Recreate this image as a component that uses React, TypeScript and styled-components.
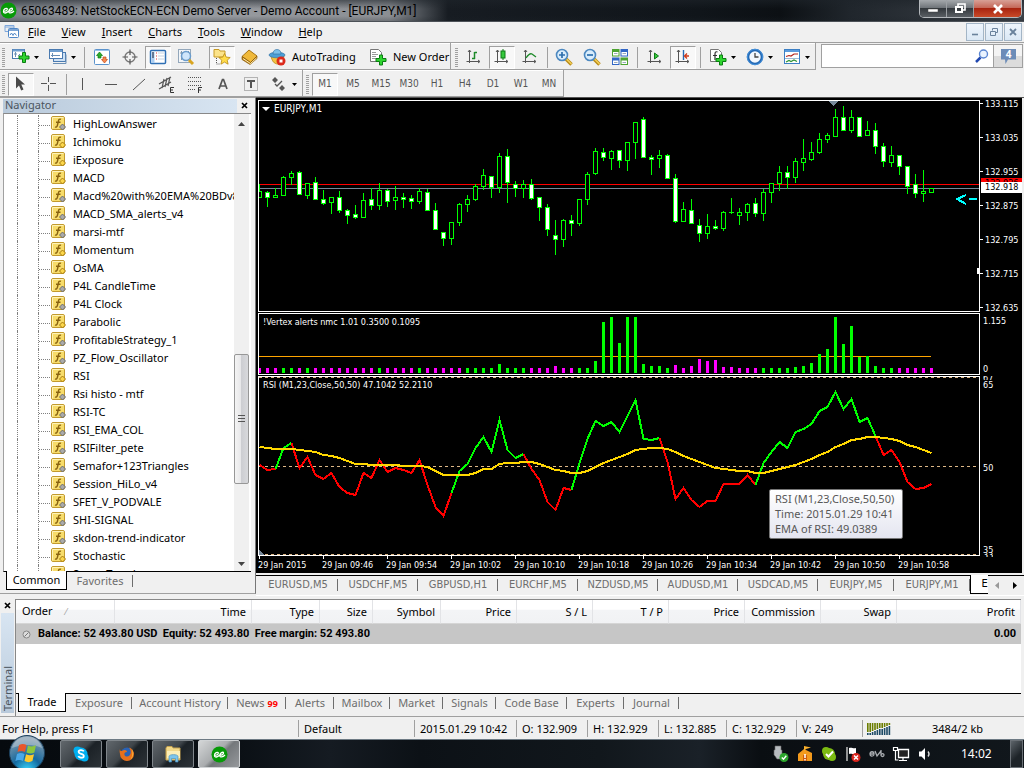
import React from "react";
import styled, { createGlobalStyle, css } from "styled-components";

const UI = `"Noto Sans", "Open Sans", sans-serif`;
const CHART = `"DejaVu Sans Condensed", "DejaVu Sans", sans-serif`;

const GlobalStyle = createGlobalStyle`
  * { box-sizing: border-box; }
  body { margin: 0; background: #f0f0f0; font: 11px/14px ${UI}; color: #000; }
  button { font: inherit; color: inherit; margin: 0; padding: 0; border: 0; background: none; }
  ul { margin: 0; padding: 0; list-style: none; }
  svg { display: block; flex: none; }
`;

/* ---------- data ---------- */

type Candle = [high: number, top: number, bottom: number, low: number, filled: number];

const CANDLES: Candle[] = [
  [89, 96, 103, 103, 0], [96, 97, 103, 112, 1], [93, 100, 103, 103, 0], [81, 82, 101, 101, 0], [76, 78, 83, 90, 0],
  [76, 77, 100, 100, 1], [88, 88, 101, 104, 0], [82, 87, 105, 105, 1], [95, 104, 109, 110, 1], [102, 102, 108, 119, 0],
  [96, 102, 116, 118, 1], [114, 115, 121, 129, 1], [110, 119, 123, 124, 1], [98, 105, 123, 123, 0], [93, 104, 111, 115, 1],
  [88, 95, 111, 115, 0], [94, 95, 107, 112, 1], [91, 102, 106, 115, 0], [98, 102, 105, 113, 1], [100, 103, 107, 114, 1],
  [93, 96, 107, 109, 0], [94, 97, 116, 116, 1], [108, 115, 135, 135, 1], [137, 137, 144, 151, 1], [127, 127, 144, 150, 0],
  [108, 109, 128, 131, 0], [100, 104, 110, 117, 0], [89, 91, 105, 106, 0], [74, 80, 92, 95, 0], [81, 81, 93, 103, 1],
  [58, 61, 93, 98, 0], [54, 61, 88, 108, 1], [86, 89, 94, 102, 1], [85, 89, 94, 103, 0], [84, 89, 104, 105, 1],
  [102, 102, 113, 126, 1], [109, 112, 135, 141, 1], [125, 140, 145, 160, 1], [124, 125, 145, 152, 0], [120, 125, 129, 141, 1],
  [104, 104, 129, 131, 0], [77, 79, 105, 110, 0], [53, 56, 79, 80, 0], [53, 57, 63, 66, 1], [55, 56, 64, 75, 0],
  [55, 55, 66, 73, 1], [47, 47, 66, 76, 0], [27, 27, 48, 64, 0], [22, 24, 63, 63, 1], [60, 62, 65, 80, 1],
  [55, 60, 64, 73, 0], [59, 60, 84, 84, 1], [79, 83, 127, 128, 1], [107, 114, 127, 127, 0], [104, 115, 129, 129, 1],
  [124, 130, 139, 147, 1], [119, 131, 139, 144, 0], [125, 131, 134, 135, 1], [116, 117, 134, 136, 0], [103, 117, 118, 119, 0],
  [113, 117, 121, 130, 0], [108, 109, 118, 126, 0], [103, 108, 119, 122, 1], [94, 97, 119, 126, 0], [88, 88, 98, 108, 0],
  [71, 77, 89, 96, 0], [71, 77, 83, 94, 1], [63, 66, 83, 88, 0], [44, 63, 68, 76, 0], [47, 57, 65, 66, 0],
  [38, 44, 58, 59, 0], [38, 40, 45, 48, 0], [14, 22, 42, 42, 0], [11, 22, 36, 36, 1], [15, 22, 36, 38, 0],
  [22, 22, 42, 42, 1], [26, 35, 41, 41, 0], [28, 35, 52, 59, 1], [48, 51, 67, 72, 1], [51, 60, 68, 72, 0],
  [60, 60, 72, 80, 1], [71, 71, 92, 99, 1], [79, 89, 99, 103, 1], [75, 96, 99, 107, 0], [93, 93, 98, 98, 0],
];

const BAR_COLOURS =
  "MMMGGMGMMMMMMMMGMMMMGMMMMMGGGGGGGGMMMMMMGGGGGGGGGGGGMMMMMMMMMMMGGGGGGGGGGGGGGGGGMMMMM";
const BAR_HEIGHTS: Record<number, number> = {
  30: 9, 37: 7, 42: 12, 43: 51, 44: 56, 45: 30, 46: 56, 47: 56, 48: 9, 49: 7, 50: 7, 52: 8, 54: 7, 55: 14, 56: 12,
  57: 13, 58: 6, 59: 6, 67: 6, 68: 7, 69: 10, 70: 19, 71: 24, 72: 56, 73: 29, 74: 47, 75: 16, 76: 17, 77: 7,
};

const RSI = [
  155, 160, 159, 138, 133, 158, 147, 165, 169, 163, 177, 183, 185, 163, 168, 150, 162, 158, 160, 163, 150, 175, 197, 206,
  183, 161, 154, 138, 127, 142, 110, 140, 148, 144, 159, 170, 192, 200, 178, 180, 153, 129, 111, 116, 112, 122, 106, 90,
  129, 130, 128, 152, 189, 178, 190, 197, 191, 191, 174, 174, 174, 165, 175, 153, 142, 132, 138, 122, 119, 114, 101, 97,
  82, 99, 89, 112, 108, 126, 145, 140, 152, 172, 179, 178, 174,
];
const EMA = [
  137, 138, 139, 139, 139, 140, 141, 142, 145, 146, 148, 151, 154, 154, 155, 155, 155, 155, 156, 156, 156, 157, 161, 165,
  165, 165, 165, 163, 159, 159, 154, 153, 153, 152, 152, 154, 157, 160, 161, 163, 163, 161, 157, 153, 150, 147, 144, 140,
  139, 138, 138, 139, 142, 146, 149, 152, 155, 158, 159, 160, 161, 161, 163, 163, 161, 159, 157, 155, 152, 149, 145, 142,
  137, 134, 130, 129, 127, 127, 128, 129, 131, 135, 137, 140, 143,
];
const RSI_RUNS: [number, number, string][] = [
  [0, 2, "#f00"], [2, 4, "#0f0"], [4, 24, "#f00"], [24, 33, "#0f0"], [33, 39, "#f00"],
  [39, 50, "#0f0"], [50, 62, "#f00"], [62, 77, "#0f0"], [77, 84, "#f00"],
];

/* name, true for a built-in indicator (gold diamond) */
const INDICATORS: [string, boolean][] = [
  ["HighLowAnswer", false], ["Ichimoku", true], ["iExposure", true], ["MACD", true], ["Macd%20with%20EMA%20BDv8", false],
  ["MACD_SMA_alerts_v4", false], ["marsi-mtf", false], ["Momentum", true], ["OsMA", true], ["P4L CandleTime", false],
  ["P4L Clock", false], ["Parabolic", true], ["ProfitableStrategy_1", false], ["PZ_Flow_Oscillator", false], ["RSI", true],
  ["Rsi histo - mtf", false], ["RSI-TC", false], ["RSI_EMA_COL", false], ["RSIFilter_pete", false],
  ["Semafor+123Triangles", false], ["Session_HiLo_v4", false], ["SFET_V_PODVALE", false], ["SHI-SIGNAL", false],
  ["skdon-trend-indicator", false], ["Stochastic", true], ["Super Trend", false],
];

const PRICES = ["133.115", "133.035", "132.955", "132.875", "132.795", "132.715", "132.635"];
const TIMES = ["29 Jan 2015", "29 Jan 09:46", "29 Jan 09:54", "29 Jan 10:02", "29 Jan 10:10", "29 Jan 10:18",
  "29 Jan 10:26", "29 Jan 10:34", "29 Jan 10:42", "29 Jan 10:50", "29 Jan 10:58"];
const CHART_TABS: [string, number][] = [["EURUSD,M5", 80], ["USDCHF,M5", 80], ["GBPUSD,H1", 80], ["EURCHF,M5", 80],
  ["NZDUSD,M5", 80], ["AUDUSD,M1", 80], ["USDCAD,M5", 80], ["EURJPY,M5", 76], ["EURJPY,M1", 76]];
const COLUMNS: [string, number | undefined][] = [["Order", 99], ["Time", 137], ["Type", 68], ["Size", 53], ["Symbol", 68],
  ["Price", 76], ["S / L", 76], ["T / P", 76], ["Price", 76], ["Commission", 76], ["Swap", 76], ["Profit", undefined]];
const TERMINAL_TABS: [string, number][] = [["Exposure", 66], ["Account History", 96], ["News", 58], ["Alerts", 48],
  ["Mailbox", 56], ["Market", 53], ["Signals", 53], ["Code Base", 71], ["Experts", 57], ["Journal", 55]];
const STATUS: [string, number][] = [["Default", 116], ["2015.01.29 10:42", 102], ["O: 132.909", 71], ["H: 132.929", 71],
  ["L: 132.885", 68], ["C: 132.929", 70], ["V: 249", 66]];

/* ---------- frame ---------- */

const Shell = styled.div`
  display: flex;
  flex-direction: column;
  min-height: 100vh;
  overflow: hidden;
`;

const TitleBar = styled.header`
  display: flex;
  height: 22px;
  border-bottom: 1px solid #4c5157;
  background:
    linear-gradient(180deg, rgba(30, 36, 42, 0.6) 0, rgba(30, 36, 42, 0) 9px, rgba(30, 36, 42, 0) 16px, rgba(30, 36, 42, 0.3) 22px),
    linear-gradient(90deg, #7a8087 0, #888c92 60px, #9a9da2 180px, #8b8e93 390px, #43484e 425px, #171c22 448px, #10151a 700px, #0c1014 780px, #20262c 850px, #3c4148 100%);
`;
const Title = styled.h1`
  margin: 0;
  display: flex;
  align-items: center;
  gap: 4px;
  font-family: Roboto, ${UI};
  font-size: 12px;
  font-weight: 400;
  line-height: 20px;
  white-space: nowrap;
  flex: 1;
`;
const WindowButtons = styled.div`
  display: flex;
  height: 18px;
  margin-right: 2px;
  border: 1px solid #b4b8bc;
  border-top: 0;
  border-radius: 0 0 5px 5px;
  overflow: hidden;
`;
const WindowButton = styled.button<{ $close?: boolean }>`
  width: ${(p) => (p.$close ? 47 : 27)}px;
  display: flex;
  align-items: center;
  justify-content: center;
  border-right: ${(p) => (p.$close ? 0 : 1)}px solid #9ca0a4;
  background: ${(p) =>
    p.$close
      ? "linear-gradient(#d8a096 0, #c5695a 45%, #a82410 50%, #c84a28 100%)"
      : "linear-gradient(#a4a8ac 0, #70757a 45%, #33383d 50%, #5a5f64 100%)"};
`;

const MenuBar = styled.nav`
  display: flex;
  align-items: center;
  height: 21px;
  padding: 0 2px 0 4px;
  border-bottom: 1px solid #a0a0a0;
  background: #f0f0f0;
`;
const MenuItems = styled.div`
  display: flex;
  gap: 16px;
  flex: 1;
  padding-left: 8px;
  line-height: 18px;
`;
const MdiButton = styled.button`
  width: 18px;
  height: 18px;
  margin-left: 1px;
  display: flex;
  align-items: center;
  justify-content: center;
  border: 1px solid #a3b5c6;
  background: linear-gradient(#eef5fc, #dbe8f5);
`;

const ToolRow = styled.div`
  display: flex;
  height: 27px;
`;
const ToolGroup = styled.div<{ $pad: number }>`
  display: flex;
  align-items: center;
  flex: none;
  padding: 2px 0 0 ${(p) => p.$pad}px;
  border-right: 1px solid #a0a0a0;
  border-bottom: 1px solid #a0a0a0;
  box-shadow: inset 0 1px #fff;
`;
const Grip = styled.i`
  width: 3px;
  height: 19px;
  margin-right: 2px;
  background: repeating-linear-gradient(#a0a0a0 0, #a0a0a0 1px, #f0f0f0 1px, #f0f0f0 2px);
`;
const Divider = styled.i<{ $after?: number }>`
  width: 1px;
  height: 21px;
  margin: 0 ${(p) => p.$after ?? 3}px 0 3px;
  background: #a0a0a0;
`;
const ToolButton = styled.button<{ $pressed?: boolean }>`
  width: 26px;
  height: 23px;
  margin: 0 1px;
  display: flex;
  align-items: center;
  justify-content: center;
  color: #555;
  ${(p) =>
    p.$pressed &&
    css`
      border: 1px solid #fff;
      border-top-color: #a0a0a0;
      border-left-color: #a0a0a0;
      background: #f8f8f8;
    `}
`;
const DropButton = styled.button`
  width: 37px;
  height: 23px;
  padding: 0 5px;
  display: flex;
  align-items: center;
  justify-content: space-between;
`;
const TextButton = styled.button<{ $width: number }>`
  width: ${(p) => p.$width}px;
  display: flex;
  align-items: center;
  gap: 6px;
  padding-left: 4px;
  white-space: nowrap;
`;
const Spacer = styled.i<{ $w: number }>`
  width: ${(p) => p.$w}px;
`;
const SearchBox = styled.div`
  flex: 1;
  min-width: 0;
  display: flex;
  height: 24px;
  margin: 1px 1px 0 5px;
  border: 1px solid #a0a0a0;
  background: #fff;
`;
const SearchInput = styled.input`
  flex: 1;
  min-width: 0;
  border: 0;
  padding: 0 4px;
  font: inherit;
  outline: 0;
`;
const SearchButton = styled.button`
  width: 22px;
  flex: none;
  display: flex;
  align-items: center;
  justify-content: center;
`;
const ChatButton = styled.button`
  width: 29px;
  flex: none;
  display: flex;
  align-items: center;
  justify-content: center;
  border-left: 1px solid #a0a0a0;
  background: linear-gradient(#f4f4f4 50%, #dcdcdc 50%);
`;

/* ---------- navigator ---------- */

const Main = styled.main`
  flex: 1;
  display: flex;
  min-height: 0;
`;
const Navigator = styled.aside`
  width: 256px;
  flex: none;
  display: flex;
  flex-direction: column;
  padding: 1px 3px 0 3px;
  margin-bottom: 4px;
  border-top: 1px solid #a0a0a0;
  border-right: 1px solid #777;
  border-bottom: 1px solid #a0a0a0;
`;
const PanelTitle = styled.div`
  display: flex;
  height: 14px;
  line-height: 13px;
`;
const PanelName = styled.h2`
  flex: 1;
  margin: 0;
  padding-left: 2px;
  font-size: 11px;
  font-weight: 400;
  line-height: 12px;
  color: #4b5560;
  background: linear-gradient(90deg, #b9cadb, #d8e5f2);
`;
const CloseButton = styled.button`
  width: 15px;
  height: 13px;
  display: flex;
  align-items: center;
  justify-content: center;
`;
const TreeFrame = styled.div`
  flex: 1 1 0;
  min-height: 0;
  display: flex;
  padding-right: 2px;
  background: #fff;
  border-top: 1px solid #888;
  border-left: 1px solid #a0a0a0;
  border-bottom: 1px solid #000;
  margin-right: 1px;
`;
const Tree = styled.ul`
  flex: 1;
  min-width: 0;
  overflow: hidden;
  padding: 1px 0 0 13px;
`;
const TreeRow = styled.li`
  display: flex;
  align-items: center;
  height: 18px;
  padding-left: 20px;
  border-left: 1px dotted #808080;
  white-space: nowrap;
`;
const Branch = styled.i`
  width: 13px;
  height: 18px;
  flex: none;
  border-left: 1px dotted #808080;
  background: repeating-linear-gradient(90deg, #808080 0, #808080 1px, #fff 1px, #fff 2px) 0 10px / 12px 1px no-repeat;
`;
const TreeLabel = styled.span`
  padding-left: 6px;
`;
const ScrollBar = styled.div`
  width: 15px;
  flex: none;
  display: flex;
  flex-direction: column;
  background: #f0f0f0;
`;
const ScrollButton = styled.button`
  height: 17px;
  padding-top: 2px;
  display: flex;
  align-items: center;
  justify-content: center;
`;
const ScrollTrack = styled.div`
  flex: 1;
  display: flex;
  flex-direction: column;
  justify-content: flex-end;
  padding-bottom: 70px;
`;
const ScrollThumb = styled.div`
  height: 130px;
  display: flex;
  align-items: center;
  justify-content: center;
  border: 1px solid #979797;
  border-radius: 2px;
  background: linear-gradient(90deg, #f4f4f4 0, #e6e6e8 50%, #cdced2 50%, #d8d9dc 100%);
`;
const NavTabs = styled.div`
  display: flex;
  height: 21px;
  padding-left: 3px;
  flex: none;
`;

/* ---------- tabs ---------- */

const ActiveTab = styled.button<{ $width: number }>`
  width: ${(p) => p.$width}px;
  height: 19px;
  margin-top: -1px;
  flex: none;
  overflow: hidden;
  white-space: nowrap;
  line-height: 16px;
  background: #fff;
  border: 1px solid #000;
  border-top: 0;
`;
const Tab = styled.button<{ $width: number }>`
  position: relative;
  width: ${(p) => p.$width}px;
  height: 18px;
  flex: none;
  white-space: nowrap;
  color: #6d6d6d;
  line-height: 16px;
  &::after {
    content: "";
    position: absolute;
    right: 0;
    top: 3px;
    width: 1px;
    height: 12px;
    background: #6d6d6d;
  }
`;
const NewsCount = styled.b`
  margin-left: 3px;
  font-size: 9px;
  line-height: 12px;
  color: #f00;
`;

/* ---------- chart ---------- */

const ChartColumn = styled.section`
  flex: 1;
  min-width: 0;
  display: flex;
  flex-direction: column;
  border-top: 1px solid #555;
`;
const ChartBox = styled.div`
  flex: 1;
  display: flex;
  flex-direction: column;
  gap: 1px;
  margin-right: 2px;
  padding: 2px 0 0 2px;
  background: #000;
  color: #fff;
  font: 9px/12px ${CHART};
`;
const Pane = styled.div`
  display: flex;
`;
const Plot = styled.div`
  position: relative;
  flex: 1;
  min-width: 0;
  border: 1px solid #fff;
`;
const PlotLabel = styled.div<{ $title?: boolean }>`
  position: absolute;
  left: ${(p) => (p.$title ? 3 : 4)}px;
  top: 2px;
  display: flex;
  align-items: center;
  gap: 4px;
  font-size: ${(p) => (p.$title ? 10 : 9)}px;
  white-space: nowrap;
`;
const Scale = styled.div<{ $indent: number; $top?: number }>`
  position: relative;
  width: 42px;
  flex: none;
  display: flex;
  flex-direction: column;
  justify-content: space-between;
  padding: ${(p) => p.$top ?? 0}px 0 0 ${(p) => p.$indent}px;
`;
const PriceScale = styled(Scale)`
  margin: -2px 0;
`;
const PriceLabel = styled.span`
  position: relative;
  &::before {
    content: "";
    position: absolute;
    left: -5px;
    top: 5px;
    width: 3px;
    height: 1px;
    background: #fff;
  }
`;
const PriceTag = styled.span<{ $top: number; $ask?: boolean }>`
  position: absolute;
  left: 1px;
  right: 0;
  top: ${(p) => p.$top}px;
  padding-left: 4px;
  height: ${(p) => (p.$ask ? 4 : 11)}px;
  line-height: 11px;
  overflow: hidden;
  color: #000;
  background: ${(p) => (p.$ask ? "#f00" : "#fff")};
`;
const HiddenLevel = styled.span<{ $top: number }>`
  position: absolute;
  left: 3px;
  top: ${(p) => p.$top}px;
  height: 4px;
  line-height: 4px;
  overflow: hidden;
`;
const TimeAxis = styled.div`
  display: flex;
  height: 17px;
  overflow: hidden;
  margin-top: -1px;
`;
const TimeLabel = styled.span`
  width: 64px;
  flex: none;
  white-space: nowrap;
  line-height: 12px;
  &::before {
    content: "";
    display: block;
    width: 1px;
    height: 3px;
    margin-left: 1px;
    background: #fff;
  }
`;
const Tooltip = styled.div`
  position: absolute;
  left: 510px;
  top: 112px;
  padding: 1px 8px 2px 5px;
  border: 1px solid #767676;
  border-radius: 2px;
  background: linear-gradient(#fff, #e4e5f0);
  color: #575757;
  font: 11px/15px ${UI};
  white-space: nowrap;
`;
const ChartTabs = styled.div`
  display: flex;
  height: 20px;
  margin: 2px 0 3px 0;
  padding-left: 2px;
  border-top: 1px solid #000;
  box-shadow: 0 1px #fff;
  font: 11px/16px ${CHART};
`;
const ChartTabList = styled.div`
  flex: 1;
  min-width: 0;
  display: flex;
  overflow: hidden;
  margin-top: -1px;
  padding-top: 1px;
`;
const TabArrows = styled.div`
  width: 36px;
  flex: none;
  display: flex;
  align-items: center;
  justify-content: space-around;
`;
const ArrowButton = styled.button`
  width: 12px;
  height: 14px;
  display: flex;
  align-items: center;
  justify-content: center;
`;

/* ---------- terminal ---------- */

const Terminal = styled.section`
  display: flex;
  height: 118px;
  padding-top: 1px;
`;
const TerminalSide = styled.div`
  width: 15px;
  flex: none;
  display: flex;
  flex-direction: column;
`;
const TerminalName = styled.h2`
  flex: 1;
  margin: 1px 1px 3px 1px;
  font-size: 11px;
  font-weight: 400;
  line-height: 13px;
  writing-mode: vertical-rl;
  rotate: 180deg;
  padding-top: 2px;
  color: #4b5560;
  background: linear-gradient(#b9cadb, #d8e5f2);
`;
const TerminalBody = styled.div`
  flex: 1;
  min-width: 0;
  display: flex;
  flex-direction: column;
  margin-right: 3px;
  border-top: 1px solid #888;
  border-left: 1px solid #888;
`;
const TableArea = styled.div`
  height: 94px;
  background: #fff;
  border-bottom: 1px solid #000;
`;
const Table = styled.table`
  width: 100%;
  table-layout: fixed;
  border-collapse: separate;
  border-spacing: 0;
`;
const HeadCell = styled.th<{ $first?: boolean }>`
  height: 24px;
  padding: 0 5px 0 6px;
  font-weight: 400;
  text-align: ${(p) => (p.$first ? "left" : "right")};
  white-space: nowrap;
  border-right: 1px solid #e2e3e6;
  border-bottom: 1px solid #d5d5d5;
  background: linear-gradient(#fff 40%, #f3f4f6 45%, #f1f2f4);
`;
const SortMark = styled.span`
  display: inline-block;
  margin-left: 13px;
  color: #999;
  font-size: 9px;
`;
const BalanceCell = styled.td<{ $right?: boolean }>`
  height: 20px;
  padding: 0 5px 0 6px;
  font-family: Roboto, ${UI};
  font-weight: 700;
  text-align: ${(p) => (p.$right ? "right" : "left")};
  white-space: nowrap;
  background: #c6c6c6;
`;
const BalanceLine = styled.div`
  display: flex;
  align-items: center;
  gap: 7px;
`;
const TerminalTabs = styled.div`
  display: flex;
  height: 19px;
  padding-left: 2px;
`;

/* ---------- status and task bars ---------- */

const StatusBar = styled.footer`
  display: flex;
  height: 23px;
  padding-top: 3px;
  border-top: 1px solid #a0a0a0;
  line-height: 18px;
  white-space: nowrap;
`;
const StatusHelp = styled.span`
  flex: 1 1 0;
  padding-left: 2px;
`;
const StatusCell = styled.span<{ $width: number }>`
  width: ${(p) => p.$width}px;
  height: 17px;
  padding-left: 5px;
  border-left: 1px solid #a0a0a0;
`;
const Traffic = styled.span`
  display: flex;
  align-items: center;
  width: 162px;
  height: 17px;
  padding-left: 4px;
  gap: 41px;
  border-left: 1px solid #a0a0a0;
`;
const TaskBar = styled.div`
  position: relative;
  display: flex;
  height: 29px;
  padding-left: 60px;
  gap: 4px;
  border-top: 1px solid #6d7a84;
  background: linear-gradient(90deg, #060a0e 0, #0b1015 240px, #151b22 330px, #0c1116 420px, #11171c 600px, #1a2128 700px, #0a0e12 760px, #11171c 100%);
`;
const StartButton = styled.button`
  position: absolute;
  left: 8px;
  top: -6px;
`;
const TaskButton = styled.button<{ $active?: boolean }>`
  width: 42px;
  height: 28px;
  display: flex;
  align-items: center;
  justify-content: center;
  border: 1px solid ${(p) => (p.$active ? "#d0d3d5" : "#80868b")};
  border-radius: 2px;
  background: ${(p) =>
    p.$active
      ? "linear-gradient(135deg, #d4d6d7 0, #a9acae 45%, #74787b 55%, #96999c 100%)"
      : "linear-gradient(135deg, #61676c 0, #3f454a 45%, #1c2227 55%, #2c3237 100%)"};
`;
const Tray = styled.div`
  flex: 1;
  display: flex;
  align-items: center;
  justify-content: flex-end;
  gap: 6px;
`;
const Clock = styled.time`
  width: 30px;
  margin: 0 13px 0 21px;
  font-size: 12px;
  color: #fff;
`;
const ShowDesktop = styled.button`
  width: 13px;
  height: 28px;
  margin-right: 1px;
  border: 1px solid #6a7076;
  background: linear-gradient(135deg, #5d646a, #1d2328 60%);
`;

/* ---------- icons ---------- */

const Svg = ({ w = 18, h = 18, children }: { w?: number; h?: number; children: React.ReactNode }) => (
  <svg width={w} height={h} viewBox={`0 0 ${w} ${h}`} fill="none" aria-hidden="true">
    {children}
  </svg>
);
const Caret = ({ c = "#000" }: { c?: string }) => (
  <Svg w={5} h={3}><path d="M0 0h5L2.5 3z" fill={c} /></Svg>
);
const Cross = () => (
  <Svg w={7} h={7}><path d="M1 1l5 5M6 1L1 6" stroke="#000" strokeWidth="1.7" /></Svg>
);
const Plus = ({ x, y }: { x: number; y: number }) => (
  <path transform={`translate(${x} ${y})`} d="M4 .5h3v3.500h3.500v3h-3.500v3.500H4V7H.5V4H4z" fill="#2fd52f" stroke="#0a7d12" />
);
const EeLogo = ({ s }: { s: number }) => (
  <svg width={s} height={s} viewBox="0 0 17 17" aria-hidden="true">
    <circle cx="8.500" cy="8.500" r="8" fill="#079a07" />
    <path d="M3 9.500c2.500 0 4.500-1 4.300-2.600C7 5.300 3.200 7 3.500 9.600c.3 2.300 3 1.500 5-.3 2.400-.1 4.200-1 4-2.500-.3-1.500-3.800.2-3.700 2.700.1 2.300 3 1.700 5.200-.5"
      fill="none" stroke="#fff" strokeWidth="1.300" />
  </svg>
);
const NewChartIcon = () => (
  <Svg>
    <rect x=".5" y="1.500" width="12" height="9" fill="#fff" stroke="#4a7ab0" />
    <path d="M.5 2.500h12" stroke="#6f9fd0" strokeWidth="2" />
    <path d="M3.500 4v5M2 6h3M6 8l2-2" stroke="#6a8fb5" />
    <Plus x={6.500} y={4} />
  </Svg>
);
const ProfilesIcon = () => (
  <Svg>
    <rect x="4.500" y="4.500" width="12" height="9" fill="#cfe2f5" stroke="#4a7ab0" />
    <path d="M4 15.500h13v-9" stroke="#6a8fb5" />
    <rect x=".5" y="1.500" width="13" height="9" fill="#fff" stroke="#4a7ab0" />
    <path d="M1 3h12" stroke="#6f9fd0" strokeWidth="2" />
    <path d="M3.500 5v4M2 7.500h9" stroke="#6a8fb5" />
  </Svg>
);
const MarketWatchIcon = () => (
  <Svg>
    <rect x="1.500" y="1.500" width="15" height="15" rx="1" fill="#fff" stroke="#5b93cc" />
    <path d="M2 2.500h14" stroke="#9cc3ea" />
    <path d="M3.500 7.500L6.500 4l3 3.500H8V10H5V7.500z" fill="#2cae2c" stroke="#0d7a14" strokeWidth=".7" />
    <path d="M8.500 11.500l3 3.500 3-3.500H13V9h-3v2.500z" fill="#f58a50" stroke="#c0481a" strokeWidth=".7" />
  </Svg>
);
const TargetIcon = () => (
  <Svg>
    <circle cx="9" cy="9" r="5" stroke="#777" strokeWidth="1.300" />
    <path d="M9 1.500v5.500M9 11v5.500M1.500 9H7M11 9h5.500" stroke="#555" strokeWidth="1.200" />
  </Svg>
);
const NavigatorIcon = () => (
  <Svg>
    <rect x="1.500" y="2.500" width="15" height="13" rx="1" fill="#fff" stroke="#2f6fb4" strokeWidth="1.500" />
    <rect x="2.500" y="4" width="3" height="11" fill="#a9cdf2" />
    <path d="M3 5h2M3 7h2M3 9h2" stroke="#223" />
    <path d="M7 5h1M7 8h1M7 11h1" stroke="#d33" />
    <path d="M9 5h6M9 8h6M9 11h6" stroke="#c4d2e2" />
  </Svg>
);
const TesterIcon = () => (
  <Svg>
    <rect x="1.500" y="1.500" width="12" height="13" fill="#f3f6f9" stroke="#93a7bb" />
    <path d="M4.500 3v9M11.500 3v6M3 5h3M10 6h3" stroke="#8499ad" />
    <circle cx="9" cy="8" r="4.500" fill="#cfe6fb" stroke="#6a9ccc" strokeWidth="1.500" />
    <path d="M12 12l4 4" stroke="#d9a520" strokeWidth="3" />
  </Svg>
);
const StarFolderIcon = () => (
  <Svg>
    <path d="M1 3V1.500h5L7 3h5v6H1z" fill="#fbe38a" stroke="#c79a24" />
    <path d="M3.500 10v6h3" stroke="#555" strokeDasharray="1 1" />
    <path d="M11.500 5.500l1.700 3.600 4 .4-3 2.700.9 4-3.600-2.100-3.600 2.100.9-4-3-2.700 4-.4z" fill="#ffdc4a" stroke="#b98914" strokeWidth=".8" />
  </Svg>
);
const GoldBookIcon = () => (
  <Svg>
    <path d="M1 8.500L8 2l8 6-6.500 6.500z" fill="#f0b93a" stroke="#a87410" />
    <path d="M1 8.500v3l8 5 7-6V8L9.500 14.500z" fill="#b87a12" stroke="#8a5c0c" strokeWidth=".7" />
    <path d="M2 10.500l7.500 5 6-5.500" stroke="#ffeeb0" />
  </Svg>
);
const ExpertIcon = () => (
  <Svg>
    <path d="M3 8c1 5 3 8 7 8s5-4 6-8z" fill="#f2c340" stroke="#b58412" strokeWidth=".8" />
    <ellipse cx="9" cy="7" rx="8" ry="2.800" fill="#4c9fd6" stroke="#2b6c9e" strokeWidth=".6" />
    <path d="M5 6c0-3 1.500-4.500 4-4.500S13 3 13 6z" fill="#7cc0ea" stroke="#2b6c9e" strokeWidth=".6" />
    <circle cx="13" cy="13" r="4.500" fill="#dc2a1c" />
    <rect x="11.500" y="11.500" width="3" height="3" fill="#fff" />
  </Svg>
);
const DocPlus = ({ fn }: { fn?: boolean }) => (
  <Svg>
    <path d="M1.500 1.500h8l3 3v9h-11z" fill="#fff" stroke="#777" />
    {fn ? (
      <path d="M8.500 4c-2-.8-2.500.5-2.500 2v6M4 7.500h4" stroke="#333" strokeWidth="1.200" />
    ) : (
      <path d="M3 4.500h4M3 6.500h6M3 8.500h4M3 10.500h4" stroke="#999" />
    )}
    <Plus x={6.500} y={6.500} />
  </Svg>
);
const Axes = ({ children }: { children: React.ReactNode }) => (
  <Svg>
    <path d="M4.500 2v13M1.500 13.500h13M3 4l1.500-2L6 4M13 12l2 1.500-2 1.500" stroke="#555" />
    {children}
  </Svg>
);
const ZoomIcon = ({ plus }: { plus?: boolean }) => (
  <Svg>
    <path d="M11 11l5.500 5.500" stroke="#b88a18" strokeWidth="3.500" />
    <path d="M11.500 11l5 5" stroke="#f3cf57" strokeWidth="1.500" />
    <circle cx="7" cy="7" r="5.500" fill="#d9edfc" stroke="#4c88c0" strokeWidth="1.600" />
    <path d={plus ? "M4 7h6M7 4v6" : "M4 7h6"} stroke="#2e6fae" strokeWidth="1.700" />
  </Svg>
);
const TilesIcon = () => (
  <Svg>
    <path d="M1 1h7.500v7.500H1zM9.500 9.500H17V17H9.500z" fill="#4da331" />
    <path d="M9.500 1H17v7.500H9.500zM1 9.500h7.500V17H1z" fill="#3166c6" />
    <path d="M2 4h5.500v3.500H2zM10.500 4H16v3.500h-5.500zM2 12.500h5.500V16H2zM10.500 12.500H16V16h-5.500z" fill="#fff" />
    <path d="M3 5.500h3.500M11.500 5.500H15M3 14.500h3.500M11.500 14.500H15" stroke="#9ab" />
  </Svg>
);
const PeriodIcon = () => (
  <Svg>
    <circle cx="9" cy="9" r="7" fill="#f2f8fe" stroke="#2469b4" strokeWidth="2.600" />
    <circle cx="9" cy="9" r="7.700" stroke="#4d9be4" strokeWidth=".8" />
    <path d="M9 5v4h3.500" stroke="#444" strokeWidth="1.300" />
  </Svg>
);
const TemplateIcon = () => (
  <Svg>
    <rect x="1.500" y="1.500" width="15" height="14" fill="#fff" stroke="#3c7fc4" />
    <path d="M2 3h14" stroke="#5a9add" strokeWidth="2" />
    <path d="M3 8.500l3-1 2 .5 3-2h4" stroke="#b3221a" strokeWidth="1.200" />
    <path d="M2 10.500h14" stroke="#9cb9d6" />
    <path d="M3 14l3-1.500 2 1 3-1.500 3 1.500" stroke="#2f9436" strokeWidth="1.200" />
  </Svg>
);
const CursorIcon = () => (
  <Svg><path d="M4 1.500v12l3-3 2.200 5 2.300-1-2.200-5H13z" fill="#4a4a4a" /></Svg>
);
const FnIcon = ({ gold }: { gold: boolean }) => (
  <Svg w={16} h={16}>
    <rect x=".5" y=".5" width="13" height="13" rx="1.500" fill="#f7dc6a" stroke="#c29a2e" />
    <path d="M1.500 12.500v-11h11" stroke="#fff3b8" />
    <path d="M10 3.300C8 2.600 7.600 4 7.300 5.500L6.500 9c-.4 1.700-1 2.500-2.500 2M5 6.200h4.500" stroke="#8a6410" strokeWidth="1.400" />
    <path d="M11.500 8l3 3-3 3-3-3z" fill={gold ? "#fbd64c" : "#aaa"} stroke={gold ? "#a77a10" : "#6c6c6c"} />
  </Svg>
);
const Globe = () => (
  <svg width="38" height="35" viewBox="0 0 38 35" aria-hidden="true">
    <defs>
      <radialGradient id="orb" cx=".5" cy="1" r=".9">
        <stop offset="0" stopColor="#39d8ff" />
        <stop offset=".45" stopColor="#14689e" />
        <stop offset="1" stopColor="#7e98ac" />
      </radialGradient>
    </defs>
    <circle cx="19" cy="19" r="17.500" fill="url(#orb)" stroke="#1b3f5c" />
    <path d="M4 14a15.500 15.500 0 0 1 30 0c-8-4-20-4-30 0z" fill="#fff" opacity=".3" />
    <path d="M11 11c3-1.500 5-1.300 7.500 0l-1.500 7c-3-1.400-5-1.300-7.500 0z" fill="#e8562a" />
    <path d="M20 11.500c2.800 1.300 5 1.300 8-.2l-1.600 7.200c-2.900 1.400-5 1.300-7.900 0z" fill="#8cc63e" />
    <path d="M9 20c2.700-1.400 4.800-1.300 7.600 0L15 27c-2.800-1.300-5-1.200-7.600 0z" fill="#4aa8e8" />
    <path d="M18 20.300c3 1.400 5 1.400 8-.1L24.400 27c-2.800 1.500-5 1.500-7.900.1z" fill="#fcc92e" />
  </svg>
);
const SkypeIcon = () => (
  <Svg w={18} h={18}>
    <circle cx="9" cy="9" r="6.500" fill="#00aff0" />
    <circle cx="5.500" cy="5.500" r="4" fill="#00aff0" />
    <circle cx="12.500" cy="12.500" r="4" fill="#00aff0" />
    <path d="M11.800 6.400C10.800 4.700 6.600 4.600 6.600 6.900c0 2.400 5.200 1.400 5.200 4 0 2.400-4.400 2.400-5.500.2" stroke="#fff" strokeWidth="1.800" />
  </Svg>
);
const FirefoxIcon = () => (
  <Svg w={18} h={18}>
    <circle cx="9" cy="9" r="6.500" fill="#2a62b4" />
    <path d="M2 4c0 2 .5 2 2 2 2-2 5-1 5 1-2 .2-3 1-2.500 3 .8 2 3.500 2 5 .5 1.500-1.500 2-5-.5-8 3 1 5 4 5 6.500a7 7 0 0 1-14 0C1.500 7 1.500 5.500 2 4z" fill="#e8701a" />
    <path d="M14 4c2 3 1.500 8-1.500 10.500 2-3 2.500-7 1.500-10.500z" fill="#fbc63a" />
  </Svg>
);
const FolderIcon = () => (
  <Svg w={18} h={18}>
    <path d="M2 3l1-1.500h5L9 3h7v12H2z" fill="#f2d98a" stroke="#c7a450" />
    <path d="M3 6h13v7H3z" fill="#fbeeb8" />
    <path d="M5 17v-5.500C5 9 14 9 14 11.500V17h-2.500v-3.500h-4V17z" fill="#7cc5ec" stroke="#4a90bf" strokeWidth=".7" />
  </Svg>
);

/* ---------- sections ---------- */

const Head = () => (
  <>
    <TitleBar>
      <Title>
        <EeLogo s={17} />
        <span>65063489: NetStockECN-ECN Demo Server - Demo Account - [EURJPY,M1]</span>
      </Title>
      <WindowButtons>
        <WindowButton aria-label="Minimize"><Svg w={12} h={10}><rect x="1" y="5" width="10" height="3" fill="#fff" stroke="#444" strokeWidth=".5" /></Svg></WindowButton>
        <WindowButton aria-label="Restore"><Svg w={12} h={11}><path d="M4 3V1h7v6H9" stroke="#fff" strokeWidth="1.600" /><rect x="2" y="4" width="6" height="5" stroke="#fff" strokeWidth="2" /></Svg></WindowButton>
        <WindowButton $close aria-label="Close"><Svg w={12} h={10}><path d="M2 1l8 8M10 1L2 9" stroke="#fff" strokeWidth="2.600" /></Svg></WindowButton>
      </WindowButtons>
    </TitleBar>
    <MenuBar>
      <Svg w={16} h={16}>
        <path d="M1 1.500h9v6H1zM1 3h9" stroke="#7fa8dc" />
        <rect x="4.500" y="4.500" width="10" height="9" rx="1" fill="#fff" stroke="#4f86c6" />
        <path d="M5 6h9" stroke="#4f86c6" strokeWidth="1.500" />
        <path d="M6 11l1.500-2L9 11.500 10.500 9l2 2.500" stroke="#4f86c6" />
      </Svg>
      <MenuItems>
        {["File", "View", "Insert", "Charts", "Tools", "Window", "Help"].map((m) => (
          <button key={m}><u>{m[0]}</u>{m.slice(1)}</button>
        ))}
      </MenuItems>
      <MdiButton aria-label="Minimize chart"><Svg w={8} h={8}><path d="M1 6.500h6" stroke="#6a829c" strokeWidth="1.600" /></Svg></MdiButton>
      <MdiButton aria-label="Restore chart"><Svg w={8} h={8}><path d="M2.500 2.500v-2h5v4h-2M.5 3.500h5v4h-5z" stroke="#6a829c" /></Svg></MdiButton>
      <MdiButton aria-label="Close chart"><Svg w={8} h={8}><path d="M1 1l6 6M7 1L1 7" stroke="#6a829c" strokeWidth="1.800" /></Svg></MdiButton>
    </MenuBar>
  </>
);

const MainToolbar = () => (
  <ToolRow>
    <ToolGroup $pad={2}>
      <Grip />
      <DropButton aria-label="New chart"><NewChartIcon /><Caret /></DropButton>
      <DropButton aria-label="Profiles"><ProfilesIcon /><Caret /></DropButton>
      <Divider />
      <ToolButton aria-label="Market Watch"><MarketWatchIcon /></ToolButton>
      <ToolButton aria-label="Data Window"><TargetIcon /></ToolButton>
      <ToolButton $pressed aria-label="Navigator"><NavigatorIcon /></ToolButton>
      <ToolButton aria-label="Strategy Tester"><TesterIcon /></ToolButton>
      <Spacer $w={8} />
      <ToolButton $pressed aria-label="Favorites"><StarFolderIcon /></ToolButton>
      <ToolButton aria-label="MetaEditor"><GoldBookIcon /></ToolButton>
      <TextButton $width={101}><ExpertIcon />AutoTrading</TextButton>
      <TextButton $width={85}><DocPlus />New Order</TextButton>
    </ToolGroup>
    <ToolGroup $pad={4}>
      <Grip />
      <ToolButton aria-label="Bar chart"><Axes><path d="M9.500 4v7M9.500 4.500H12M7 10.500h3" stroke="#1c8a28" strokeWidth="1.500" /></Axes></ToolButton>
      <ToolButton $pressed aria-label="Candlesticks"><Axes><path d="M10 1v11" stroke="#0d7a14" /><rect x="8" y="3" width="4" height="7" fill="#35c93c" stroke="#0d7a14" /></Axes></ToolButton>
      <ToolButton aria-label="Line chart"><Axes><path d="M5 10c2-3 4-5 6-4l4 3" stroke="#1c8a28" strokeWidth="1.300" /></Axes></ToolButton>
      <Divider $after={2} />
      <ToolButton aria-label="Zoom in"><ZoomIcon plus /></ToolButton>
      <ToolButton aria-label="Zoom out"><ZoomIcon /></ToolButton>
      <ToolButton aria-label="Tile windows"><TilesIcon /></ToolButton>
      <Divider />
      <ToolButton aria-label="Auto scroll"><Axes><path d="M8.500 5v6l4-3z" fill="#35c93c" stroke="#0d7a14" /></Axes></ToolButton>
      <ToolButton $pressed aria-label="Chart shift"><Axes><path d="M9.500 2v10" stroke="#2469b4" strokeWidth="1.400" /><path d="M11 8h4M13 5.500L10.500 8l2.500 2.500" stroke="#d03a1a" strokeWidth="1.300" /></Axes></ToolButton>
      <Divider />
      <DropButton aria-label="Indicators"><DocPlus fn /><Caret /></DropButton>
      <DropButton aria-label="Periods"><PeriodIcon /><Caret /></DropButton>
      <DropButton aria-label="Templates"><TemplateIcon /><Caret /></DropButton>
    </ToolGroup>
    <SearchBox>
      <SearchInput aria-label="Search" />
      <SearchButton aria-label="Find">
        <Svg w={14} h={14}><circle cx="8.500" cy="5" r="4" fill="#eaf3ff" stroke="#5b86d2" strokeWidth="1.400" /><path d="M5.500 8.500L1 13" stroke="#2148b0" strokeWidth="2.500" /></Svg>
      </SearchButton>
      <ChatButton aria-label="4 messages">
        <Svg w={17} h={17}><path d="M1 1h15v10.500H8L5.500 16 5 11.500H1z" fill="#6c8cb8" /><text x="8.500" y="10" textAnchor="middle" fontSize="10" fontWeight="700" fill="#fff">4</text></Svg>
      </ChatButton>
    </SearchBox>
  </ToolRow>
);

const PERIODS = ["M1", "M5", "M15", "M30", "H1", "H4", "D1", "W1", "MN"];

const Period = styled.span`
  font: 10px/12px ${CHART};
`;

const LineToolbar = () => (
  <ToolRow>
    <ToolGroup $pad={2}>
      <Grip />
      <ToolButton $pressed aria-label="Cursor"><CursorIcon /></ToolButton>
      <ToolButton aria-label="Crosshair"><Svg w={16} h={16}><path d="M7.500 1v5M7.500 9v6M0 7.500h6M9 7.500h6" stroke="#555" /></Svg></ToolButton>
      <Divider $after={2} />
      <ToolButton aria-label="Vertical line"><Svg w={16} h={16}><path d="M7.500 2v12" stroke="#555" /></Svg></ToolButton>
      <ToolButton aria-label="Horizontal line"><Svg w={16} h={16}><path d="M2 8.500h12" stroke="#555" /></Svg></ToolButton>
      <ToolButton aria-label="Trendline"><Svg w={16} h={16}><path d="M2 14L14 3" stroke="#555" /></Svg></ToolButton>
      <ToolButton aria-label="Channel"><Svg><path d="M1 9l12-7M1 14L13 7M4 13l2-9M7 12l2-9M10 11l2-9" stroke="#555" strokeWidth="1.200" /><path d="M16 12.500h-3.500v5H16M12.500 15H15" stroke="#333" /></Svg></ToolButton>
      <ToolButton aria-label="Fibonacci"><Svg><path d="M2 2.500h13M2 6.500h13M2 10.500h13M2 14.500h8" stroke="#555" strokeDasharray="1 1" /><path d="M16 12.500h-3.500V18M12.500 15H15" stroke="#333" /></Svg></ToolButton>
      <ToolButton aria-label="Text"><Svg w={12} h={12}><path d="M2 11L5.500 1.500h1L10 11M3.500 8h5" stroke="#555" strokeWidth="1.700" /></Svg></ToolButton>
      <ToolButton aria-label="Text label"><Svg w={14} h={14}><path d="M.5.5h13v13H.5z" stroke="#777" strokeDasharray="1 1" /><path d="M3 4h8M7 4v7" stroke="#555" strokeWidth="2" /></Svg></ToolButton>
      <DropButton aria-label="Arrows"><Svg><path d="M2 5l3-3 3 3-3 3zM9 13l3-3 3 3-3 3z" fill="#555" /><path d="M5 9l2 2 5-5" stroke="#555" strokeWidth="1.300" /></Svg><Caret /></DropButton>
    </ToolGroup>
    <ToolGroup $pad={3}>
      <Grip />
      {PERIODS.map((p, i) => (
        <ToolButton key={p} $pressed={i === 0}><Period>{p}</Period></ToolButton>
      ))}
    </ToolGroup>
  </ToolRow>
);

const NavigatorPanel = () => (
  <Navigator>
    <PanelTitle>
      <PanelName>Navigator</PanelName>
      <CloseButton aria-label="Close Navigator"><Cross /></CloseButton>
    </PanelTitle>
    <TreeFrame>
      <Tree>
        {INDICATORS.map(([name, gold]) => (
          <TreeRow key={name}>
            <Branch />
            <FnIcon gold={gold} />
            <TreeLabel>{name}</TreeLabel>
          </TreeRow>
        ))}
      </Tree>
      <ScrollBar>
        <ScrollButton aria-label="Scroll up"><Svg w={7} h={4}><path d="M0 4h7L3.500 0z" fill="#444" /></Svg></ScrollButton>
        <ScrollTrack>
          <ScrollThumb><Svg w={7} h={8}><path d="M0 .5h7M0 3.500h7M0 6.500h7" stroke="#555" /></Svg></ScrollThumb>
        </ScrollTrack>
        <ScrollButton aria-label="Scroll down"><Svg w={7} h={4}><path d="M0 0h7L3.500 4z" fill="#444" /></Svg></ScrollButton>
      </ScrollBar>
    </TreeFrame>
    <NavTabs>
      <ActiveTab $width={61}>Common</ActiveTab>
      <Tab $width={66}>Favorites</Tab>
    </NavTabs>
  </Navigator>
);

const line = (values: number[], from: number, to: number) =>
  values.slice(from, to + 1).map((v, i) => `${(from + i) * 8 + 0.5},${v}`).join(" ");

const ChartPanel = () => (
  <ChartColumn>
    <ChartBox>
      <Pane>
        <Plot>
          <svg width="100%" height="210" shapeRendering="crispEdges" role="img" aria-label="EURJPY one-minute candles">
            <path d="M0 83.500h2000" stroke="#f00" />
            <path d="M0 87.500h2000" stroke="#778899" />
            <g transform="translate(0 -6)">
              {CANDLES.map(([h, t, b, l, filled], i) => (
                <g key={i} stroke="#0f0">
                  <path d={`M${i * 8 + 0.5} ${h}V${l}`} />
                  {b - t > 1 ? (
                    <rect x={i * 8 - 1.5} y={t + 0.5} width="4" height={b - t - 1} fill={filled ? "#fff" : "#000"} />
                  ) : (
                    <path d={`M${i * 8 - 2} ${t + 0.5}h5`} />
                  )}
                </g>
              ))}
            </g>
            <path d="M570 0h9l-4.500 5z" fill="#778899" />
            <path d="M707 94l-9 4 9 5M710 97.500h8" fill="none" stroke="#0ff" strokeWidth="2" />
            <path d="M718 167h2v6h-2z" fill="#fff" />
          </svg>
          <PlotLabel $title><Svg w={8} h={4}><path d="M0 0h8L4 4z" fill="#fff" /></Svg>EURJPY,M1</PlotLabel>
        </Plot>
        <PriceScale $indent={5}>
          {PRICES.map((p) => <PriceLabel key={p}>{p}</PriceLabel>)}
          <PriceTag $ask $top={80}>132.926</PriceTag>
          <PriceTag $top={84}>132.918</PriceTag>
        </PriceScale>
      </Pane>
      <Pane>
        <Plot>
          <svg width="100%" height="60" shapeRendering="crispEdges" role="img" aria-label="Vertex histogram">
            <path d="M0 42.500h672" stroke="#ffa500" />
            {BAR_COLOURS.split("").map((c, i) => {
              const h = BAR_HEIGHTS[i] ?? 5;
              return <rect key={i} x={i * 8 - 1} y={59 - h} width="3" height={h} fill={c === "G" ? "#0f0" : "#f0f"} />;
            })}
          </svg>
          <PlotLabel>!Vertex alerts nmc 1.01 0.3500 0.1095</PlotLabel>
        </Plot>
        <Scale $indent={3} $top={2}><span>1.155</span><span>0</span></Scale>
      </Pane>
      <Pane>
        <Plot>
          <svg width="100%" height="178" shapeRendering="crispEdges" role="img" aria-label="RSI and its moving average">
            <path d="M0 .5h2000M0 89.500h2000M0 177.500h2000" stroke="#deb887" strokeDasharray="3 3" />
            <g transform="translate(0 -67)" fill="none" strokeWidth="2">
              {RSI_RUNS.map(([a, b, c]) => <polyline key={a} points={line(RSI, a, b)} stroke={c} />)}
              <polyline points={line(EMA, 0, 84)} stroke="#ffd700" />
            </g>
            <path d="M0 172l5 6H0z" fill="#778899" />
          </svg>
          <PlotLabel>RSI (M1,23,Close,50,50) 47.1042 52.2110</PlotLabel>
          <Tooltip>RSI (M1,23,Close,50,50)<br />Time: 2015.01.29 10:41<br />EMA of RSI: 49.0389</Tooltip>
        </Plot>
        <Scale $indent={3} $top={3}>
          <HiddenLevel $top={0}>67</HiddenLevel>
          <span>65</span><span>50</span><span>35</span>
          <HiddenLevel $top={177}>33</HiddenLevel>
        </Scale>
      </Pane>
      <TimeAxis>{TIMES.map((t) => <TimeLabel key={t}>{t}</TimeLabel>)}</TimeAxis>
    </ChartBox>
    <ChartTabs>
      <ChartTabList>
        {CHART_TABS.map(([t, w]) => <Tab key={t} $width={w}>{t}</Tab>)}
        <ActiveTab $width={76}>EURJPY,M1</ActiveTab>
      </ChartTabList>
      <TabArrows>
        <ArrowButton aria-label="Previous tabs"><Svg w={4} h={7}><path d="M4 0v7L0 3.500z" fill="#999" /></Svg></ArrowButton>
        <ArrowButton aria-label="Next tabs"><Svg w={4} h={7}><path d="M0 0v7l4-3.500z" fill="#000" /></Svg></ArrowButton>
      </TabArrows>
    </ChartTabs>
  </ChartColumn>
);

const TerminalPanel = () => (
  <Terminal>
    <TerminalSide>
      <CloseButton aria-label="Close Terminal"><Cross /></CloseButton>
      <TerminalName>Terminal</TerminalName>
    </TerminalSide>
    <TerminalBody>
      <TableArea>
        <Table>
          <colgroup>{COLUMNS.map(([, w], i) => <col key={i} width={w} />)}</colgroup>
          <thead>
            <tr>
              {COLUMNS.map(([c], i) => (
                <HeadCell key={i} $first={i === 0}>{c}{i === 0 && <SortMark>⁄</SortMark>}</HeadCell>
              ))}
            </tr>
          </thead>
          <tbody>
            <tr>
              <BalanceCell colSpan={11}>
                <BalanceLine>
                  <Svg w={9} h={9}><circle cx="4.500" cy="4.500" r="3.500" fill="#ddd" stroke="#888" /><path d="M2.500 6.500l4-4" stroke="#777" /></Svg>
                  <span>Balance: 52 493.80 USD&nbsp; Equity: 52 493.80&nbsp; Free margin: 52 493.80</span>
                </BalanceLine>
              </BalanceCell>
              <BalanceCell $right>0.00</BalanceCell>
            </tr>
          </tbody>
        </Table>
      </TableArea>
      <TerminalTabs>
        <ActiveTab $width={48}>Trade</ActiveTab>
        {TERMINAL_TABS.map(([t, w]) => (
          <Tab key={t} $width={w}>{t}{t === "News" && <NewsCount>99</NewsCount>}</Tab>
        ))}
      </TerminalTabs>
    </TerminalBody>
  </Terminal>
);

const BARS = Array.from({ length: 10 }, (_, i) => i);

const Foot = () => (
  <>
    <StatusBar>
      <StatusHelp>For Help, press F1</StatusHelp>
      {STATUS.map(([t, w]) => <StatusCell key={t} $width={w}>{t}</StatusCell>)}
      <Traffic>
        <Svg w={24} h={12}>
          {BARS.map((i) => {
            const split = 9 - Math.floor(i * 0.8);
            return (
              <g key={i}>
                <rect x={i * 2.4} y="0" width="1.600" height={split} fill="#6b7d00" />
                <rect x={i * 2.4} y={split + 1} width="1.600" height={11 - split} fill="#1d4a66" />
              </g>
            );
          })}
        </Svg>
        3484/2 kb
      </Traffic>
    </StatusBar>
    <TaskBar>
      <StartButton aria-label="Start"><Globe /></StartButton>
      <TaskButton aria-label="Skype"><SkypeIcon /></TaskButton>
      <TaskButton aria-label="Firefox"><FirefoxIcon /></TaskButton>
      <TaskButton aria-label="Explorer"><FolderIcon /></TaskButton>
      <TaskButton $active aria-label="Trading terminal"><EeLogo s={17} /></TaskButton>
      <Tray>
        <Svg><path d="M3 1h6v4h1v6l-2 3H5l-2-3-1-1V5h1z" fill="#b8bcc0" stroke="#666" strokeWidth=".6" /><circle cx="12" cy="12.500" r="4.500" fill="#2ca52c" /><path d="M9.800 12.500l1.700 1.800 2.800-3.500" stroke="#fff" strokeWidth="1.400" /></Svg>
        <Svg><path d="M2 16V9l6-5 8 4v8z" fill="#f39a1c" /><path d="M8 6V1l7 1.500L10 4" fill="#fbb12c" /><path d="M7 16v-6h4v6z" fill="#d05c0a" /><path d="M9 9v4M9 14v1.500" stroke="#fff" strokeWidth="1.500" /></Svg>
        <Svg><circle cx="9" cy="9" r="6" fill="#7cbb12" /><circle cx="6" cy="6" r="4" fill="#7cbb12" /><circle cx="12" cy="12" r="4" fill="#7cbb12" /><path d="M6 9l2.500 2.500L13 6.500" stroke="#fff" strokeWidth="2" /></Svg>
        <Svg><path d="M3 2v14" stroke="#ccc" strokeWidth="1.400" /><path d="M5 3c3-1 4 1 7 0v6c-3 1-4-1-7 0z" fill="#fff" /><circle cx="12" cy="12.500" r="4.500" fill="#d8241c" /><path d="M10 10.500l4 4M14 10.500l-4 4" stroke="#fff" strokeWidth="1.500" /></Svg>
        <Svg><path d="M2 9h4c0-3-4-3-4 0s3 2.500 4 1M7 6l2 5 4-5M13 11c0-3 3-3 3-1s-3 2-3 0V5" stroke="#a8acb0" strokeWidth="1.300" /></Svg>
        <Svg><path d="M6.500 4.500h10v8h-10z" fill="#222" stroke="#fff" strokeWidth="1.300" /><path d="M11 13v2.500M7 15.500h8M1 2.500h5M1.500 2v3.500h4V2M3.500 6v9h3" stroke="#fff" strokeWidth="1.200" /></Svg>
        <Svg><path d="M3 6.500h2.500L9 3v12l-3.500-3.500H3z" fill="#fff" /><path d="M12 6.500c1.300 1.500 1.300 3.500 0 5" stroke="#ddd" strokeWidth="1.300" /></Svg>
        <Clock>14:02</Clock>
        <ShowDesktop aria-label="Show desktop" />
      </Tray>
    </TaskBar>
  </>
);

export default function App() {
  return (
    <Shell>
      <GlobalStyle />
      <Head />
      <MainToolbar />
      <LineToolbar />
      <Main>
        <NavigatorPanel />
        <ChartPanel />
      </Main>
      <TerminalPanel />
      <Foot />
    </Shell>
  );
}
